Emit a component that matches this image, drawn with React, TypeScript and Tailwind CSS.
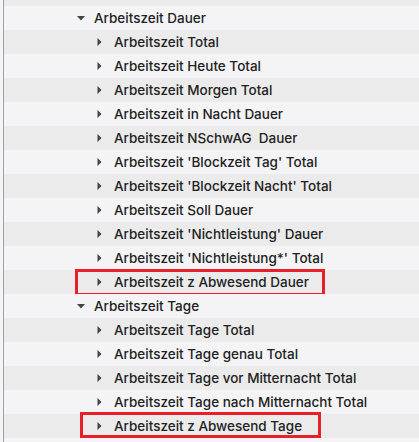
type Row = {
  label: string;
  level: 1 | 2;
  open?: boolean;
  mark?: 'wide' | 'narrow';
};

const rows: Row[] = [
  { label: 'Arbeitszeit Dauer', level: 1, open: true },
  { label: 'Arbeitszeit Total', level: 2 },
  { label: 'Arbeitszeit Heute Total', level: 2 },
  { label: 'Arbeitszeit Morgen Total', level: 2 },
  { label: 'Arbeitszeit in Nacht Dauer', level: 2 },
  { label: 'Arbeitszeit NSchwAG  Dauer', level: 2 },
  { label: "Arbeitszeit 'Blockzeit Tag' Total", level: 2 },
  { label: "Arbeitszeit 'Blockzeit Nacht' Total", level: 2 },
  { label: 'Arbeitszeit Soll Dauer', level: 2 },
  { label: "Arbeitszeit 'Nichtleistung' Dauer", level: 2 },
  { label: "Arbeitszeit 'Nichtleistung*' Total", level: 2 },
  { label: 'Arbeitszeit z Abwesend Dauer', level: 2, mark: 'wide' },
  { label: 'Arbeitszeit Tage', level: 1, open: true },
  { label: 'Arbeitszeit Tage Total', level: 2 },
  { label: 'Arbeitszeit Tage genau Total', level: 2 },
  { label: 'Arbeitszeit Tage vor Mitternacht Total', level: 2 },
  { label: 'Arbeitszeit Tage nach Mitternacht Total', level: 2 },
  { label: 'Arbeitszeit z Abwesend Tage', level: 2, mark: 'narrow' },
];

function Caret({ open }: { open?: boolean }) {
  if (open) {
    return (
      <svg width="8" height="5" viewBox="0 0 8 5" className="shrink-0">
        <path d="M0 0 L8 0 L4 4.5 Z" fill="#444" />
      </svg>
    );
  }
  return (
    <svg width="5" height="8" viewBox="0 0 5 8" className="shrink-0">
      <path d="M0.5 0 L4.5 4 L0.5 8 Z" fill="#444" />
    </svg>
  );
}

export default function App() {
  return (
    <div
      className="h-[442px] w-[419px] overflow-hidden bg-[#f4f4f6] pl-[3px] text-[13.5px] font-medium text-[#222]"
      style={{ fontFamily: 'Inter, "Noto Sans", sans-serif' }}
    >
      <div className="flex h-full flex-col border-l border-[#a0a0a0]">
        <div className="h-[6px] shrink-0 bg-[#ebebeb]" />
        {rows.map((row, i) => (
          <div
            key={row.label}
            className={`relative flex h-6 shrink-0 items-center ${
              i % 2 === 0 ? 'bg-[#f4f4f6]' : 'bg-[#ebebeb]'
            } ${row.level === 1 ? 'pl-[73px]' : 'pl-[93px]'}`}
          >
            <span className="flex w-[17px] items-center">
              <Caret open={row.open} />
            </span>
            <span className="whitespace-pre">{row.label}</span>
            {row.mark === 'wide' && (
              <span className="absolute left-[71px] top-[-1px] h-[27px] w-[250px] border-[3px] border-[#e8202a]" />
            )}
            {row.mark === 'narrow' && (
              <span className="absolute left-[76px] top-[-2px] h-[26px] w-[241px] border-[3px] border-[#e8202a]" />
            )}
          </div>
        ))}
        <div className="flex-1 bg-[#f4f4f6]" />
      </div>
    </div>
  );
}
